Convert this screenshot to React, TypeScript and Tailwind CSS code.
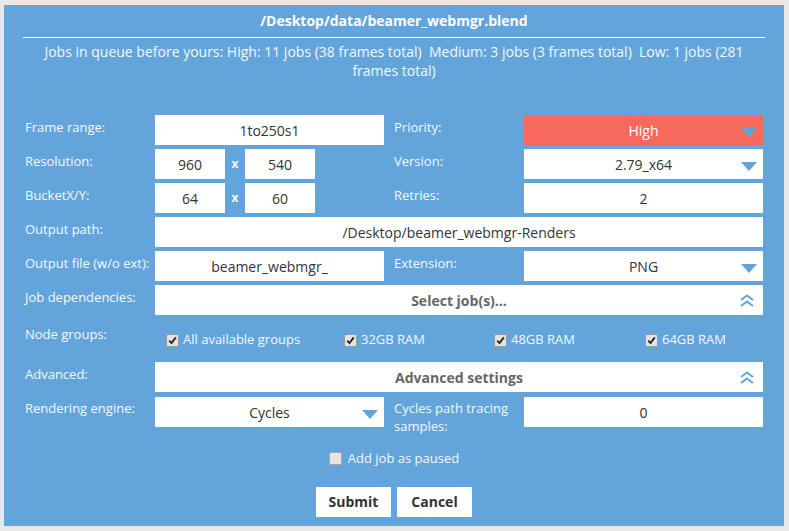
const font = { fontFamily: '"Open Sans", "Liberation Sans", sans-serif' };

function Label({ children }: { children: React.ReactNode }) {
  return <div className="pt-[3px] text-[13px] leading-[18px] text-[#f4f8fc]">{children}</div>;
}

function Field({ value, className = "" }: { value: string; className?: string }) {
  return (
    <div className={`flex h-[30px] items-center justify-center bg-white text-[14px] text-[#333] ${className}`}>
      {value}
    </div>
  );
}

function Caret() {
  return (
    <svg width="16" height="9" viewBox="0 0 16 9" className="absolute right-[6px] top-[13px]">
      <polygon points="0,0 16,0 8,9" fill="#62a5da" />
    </svg>
  );
}

function SelectBox({ value, red = false }: { value: string; red?: boolean }) {
  return (
    <div
      className={`relative flex h-[30px] items-center justify-center text-[14px] ${
        red ? "bg-[#f6695c] text-white" : "bg-white text-[#333]"
      }`}
    >
      {value}
      <Caret />
    </div>
  );
}

function Chevrons() {
  return (
    <svg width="16" height="13" viewBox="0 0 16 13" className="absolute right-[8px] top-[9px]">
      <path d="M2 6 L8 1.5 L14 6 M2 12 L8 7.5 L14 12" fill="none" stroke="#62a5da" strokeWidth="2" />
    </svg>
  );
}

function Dropdown({ text }: { text: string }) {
  return (
    <div className="relative col-span-3 flex h-[30px] items-center justify-center bg-white text-[14px] font-bold text-[#666]">
      {text}
      <Chevrons />
    </div>
  );
}

function Check({ on = true }: { on?: boolean }) {
  return (
    <span className="flex h-[13px] w-[13px] items-center justify-center rounded-[2px] border border-[#9a9a9a] bg-[#e4e4e4]">
      {on && (
        <svg width="9" height="9" viewBox="0 0 9 9">
          <path d="M1.2 4.6 L3.5 7 L7.8 1.4" fill="none" stroke="#222" strokeWidth="1.8" />
        </svg>
      )}
    </span>
  );
}

function Group({ text, className }: { text: string; className: string }) {
  return (
    <div className={`flex items-center gap-[4px] text-[13px] text-[#f4f8fc] ${className}`}>
      <Check />
      <span>{text}</span>
    </div>
  );
}

export default function App() {
  return (
    <div className="h-[531px] w-[789px] bg-[#e9e7e7] pl-[4px] pt-[5px]" style={font}>
      <div className="h-[521px] w-[780px] bg-[#63a4da] px-[19px] text-white">
        <h1 className="pt-[6px] text-center text-[14px] font-bold leading-[20px]">
          /Desktop/data/beamer_webmgr.blend
        </h1>
        <hr className="mt-[6px] border-t border-white" />
        <p className="mt-[4px] whitespace-pre-wrap text-center text-[14px] leading-[19px] text-[#f4f8fc]">
          {"Jobs in queue before yours: High: 11 jobs (38 frames total)  Medium: 3 jobs (3 frames total)  Low: 1 jobs (281 frames total)"}
        </p>

        <div className="mt-[35px] grid grid-cols-[132px_229px_140px_239px] gap-y-[4px]">
          <div className="pl-[2px]"><Label>Frame range:</Label></div>
          <Field value="1to250s1" />
          <div className="pl-[10px]"><Label>Priority:</Label></div>
          <SelectBox value="High" red />

          <div className="pl-[2px]"><Label>Resolution:</Label></div>
          <div className="flex items-center">
            <Field value="960" className="w-[70px]" />
            <span className="w-[20px] text-center text-[12px] font-bold text-[#f4f8fc]">x</span>
            <Field value="540" className="w-[70px]" />
          </div>
          <div className="pl-[10px]"><Label>Version:</Label></div>
          <SelectBox value="2.79_x64" />

          <div className="pl-[2px]"><Label>BucketX/Y:</Label></div>
          <div className="flex items-center">
            <Field value="64" className="w-[70px]" />
            <span className="w-[20px] text-center text-[12px] font-bold text-[#f4f8fc]">x</span>
            <Field value="60" className="w-[70px]" />
          </div>
          <div className="pl-[10px]"><Label>Retries:</Label></div>
          <Field value="2" />

          <div className="pl-[2px]"><Label>Output path:</Label></div>
          <Field value="/Desktop/beamer_webmgr-Renders" className="col-span-3" />

          <div className="pl-[2px]"><Label>Output file (w/o ext):</Label></div>
          <Field value="beamer_webmgr_" />
          <div className="pl-[10px]"><Label>Extension:</Label></div>
          <SelectBox value="PNG" />

          <div className="pl-[2px]"><Label>Job dependencies:</Label></div>
          <Dropdown text="Select job(s)..." />

          <div className="h-[39px] pl-[2px] pt-[3px]"><Label>Node groups:</Label></div>
          <div className="col-span-3 flex pt-[3px]">
            <Group text="All available groups" className="ml-[11px] w-[178px]" />
            <Group text="32GB RAM" className="w-[150px]" />
            <Group text="48GB RAM" className="w-[151px]" />
            <Group text="64GB RAM" className="" />
          </div>

          <div className="pl-[2px]"><Label>Advanced:</Label></div>
          <Dropdown text="Advanced settings" />

          <div className="pl-[2px]"><Label>Rendering engine:</Label></div>
          <div className="pt-[1px]"><SelectBox value="Cycles" /></div>
          <div className="pl-[10px] pr-[6px]"><Label>Cycles path tracing samples:</Label></div>
          <div className="pt-[1px]"><Field value="0" /></div>
        </div>

        <div className="mt-[14px] flex items-center justify-center gap-[6px] text-[13px] text-[#f4f8fc]">
          <span className="flex h-[13px] w-[13px] rounded-[2px] border border-[#a8a8a8] bg-[#e6e6e6]" />
          <span>Add job as paused</span>
        </div>

        <div className="mt-[18px] flex justify-center gap-[6px]">
          <button className="h-[30px] w-[75px] bg-white text-[14px] font-bold text-[#333]">Submit</button>
          <button className="h-[30px] w-[75px] bg-white text-[14px] font-bold text-[#333]">Cancel</button>
        </div>
      </div>
    </div>
  );
}
